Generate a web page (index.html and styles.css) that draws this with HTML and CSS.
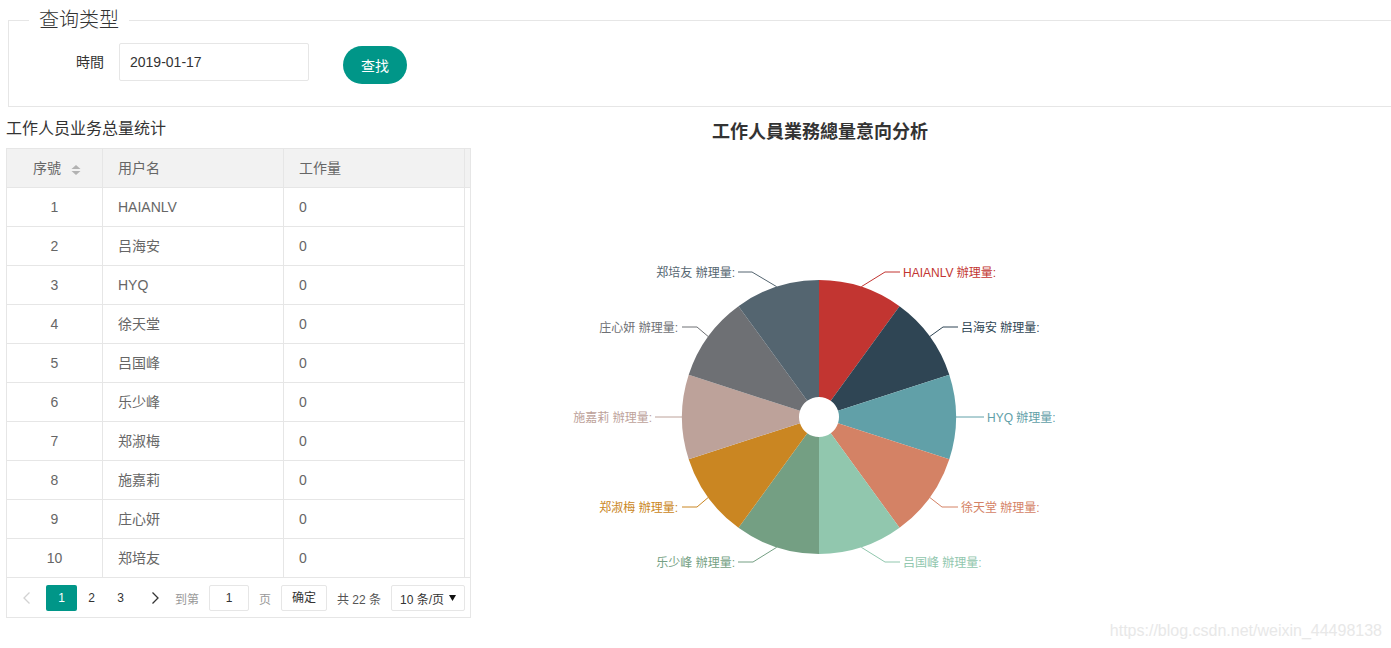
FILE: index.html
```html
<!DOCTYPE html>
<html lang="zh-CN">
<head>
<meta charset="utf-8">
<title>工作人员业务总量统计</title>
<link rel="stylesheet" href="styles.css">
</head>
<body>
<fieldset class="query">
  <legend class="query-legend">查询类型</legend>
  <div class="form-row">
    <label class="form-label" for="date">時間</label>
    <input class="form-input" id="date" type="text" value="2019-01-17">
    <button class="btn-search" type="button">查找</button>
  </div>
</fieldset>
<main class="main">
  <section class="left">
    <h2 class="left-title">工作人员业务总量统计</h2>
    <div class="tbl">
      <div class="tbl-head">
        <div class="th th-center"><span>序號</span><svg class="sort" width="10" height="10" viewBox="0 0 10 10"><polygon points="0.5,4 5,0 9.5,4" fill="#b2b2b2"/><polygon points="0.5,6 9.5,6 5,10" fill="#b2b2b2"/></svg></div>
        <div class="th">用户名</div>
        <div class="th">工作量</div>
        <div class="th th-gutter"></div>
      </div>
      <div class="tbl-body">
        <div class="tr"><div class="td td-center">1</div><div class="td">HAIANLV</div><div class="td">0</div></div>
        <div class="tr"><div class="td td-center">2</div><div class="td">吕海安</div><div class="td">0</div></div>
        <div class="tr"><div class="td td-center">3</div><div class="td">HYQ</div><div class="td">0</div></div>
        <div class="tr"><div class="td td-center">4</div><div class="td">徐天堂</div><div class="td">0</div></div>
        <div class="tr"><div class="td td-center">5</div><div class="td">吕国峰</div><div class="td">0</div></div>
        <div class="tr"><div class="td td-center">6</div><div class="td">乐少峰</div><div class="td">0</div></div>
        <div class="tr"><div class="td td-center">7</div><div class="td">郑淑梅</div><div class="td">0</div></div>
        <div class="tr"><div class="td td-center">8</div><div class="td">施嘉莉</div><div class="td">0</div></div>
        <div class="tr"><div class="td td-center">9</div><div class="td">庄心妍</div><div class="td">0</div></div>
        <div class="tr"><div class="td td-center">10</div><div class="td">郑培友</div><div class="td">0</div></div>
      </div>
      <div class="pager">
        <span class="pg-prev"><svg width="8" height="12" viewBox="0 0 8 12"><polyline points="6.5,0.5 1,6 6.5,11.5" fill="none" stroke="#d2d2d2" stroke-width="1.3"/></svg></span>
        <span class="pg-curr">1</span>
        <span class="pg-num">2</span>
        <span class="pg-num">3</span>
        <span class="pg-next"><svg width="8" height="12" viewBox="0 0 8 12"><polyline points="1.5,0.5 7,6 1.5,11.5" fill="none" stroke="#333" stroke-width="1.3"/></svg></span>
        <span class="pg-muted">到第</span>
        <span class="pg-input">1</span>
        <span class="pg-muted">页</span>
        <span class="pg-btn">确定</span>
        <span class="pg-count">共 22 条</span>
        <span class="pg-select"><span>10 条/页</span><svg width="7" height="6" viewBox="0 0 7 6"><polygon points="0,0 7,0 3.5,6" fill="#111"/></svg></span>
      </div>
    </div>
  </section>
  <section class="chart">
    <svg class="pie" width="698" height="500" viewBox="471 118 698 500">
      <text class="chart-title" x="820" y="132">工作人員業務總量意向分析</text>
      <g>
        <path fill="#c23531" d="M819,280 A137,137 0 0 1 899.53,306.17 L830.76,400.82 A20,20 0 0 0 819,397 Z"/>
        <path fill="#2f4554" d="M899.53,306.17 A137,137 0 0 1 949.29,374.67 L838.02,410.82 A20,20 0 0 0 830.76,400.82 Z"/>
        <path fill="#61a0a8" d="M949.29,374.67 A137,137 0 0 1 949.29,459.33 L838.02,423.18 A20,20 0 0 0 838.02,410.82 Z"/>
        <path fill="#d48265" d="M949.29,459.33 A137,137 0 0 1 899.53,527.83 L830.76,433.18 A20,20 0 0 0 838.02,423.18 Z"/>
        <path fill="#91c7ae" d="M899.53,527.83 A137,137 0 0 1 819,554 L819,437 A20,20 0 0 0 830.76,433.18 Z"/>
        <path fill="#749f83" d="M819,554 A137,137 0 0 1 738.47,527.83 L807.24,433.18 A20,20 0 0 0 819,437 Z"/>
        <path fill="#ca8622" d="M738.47,527.83 A137,137 0 0 1 688.71,459.33 L799.98,423.18 A20,20 0 0 0 807.24,433.18 Z"/>
        <path fill="#bda29a" d="M688.71,459.33 A137,137 0 0 1 688.71,374.67 L799.98,410.82 A20,20 0 0 0 799.98,423.18 Z"/>
        <path fill="#6e7074" d="M688.71,374.67 A137,137 0 0 1 738.47,306.17 L807.24,400.82 A20,20 0 0 0 799.98,410.82 Z"/>
        <path fill="#546570" d="M738.47,306.17 A137,137 0 0 1 819,280 L819,397 A20,20 0 0 0 807.24,400.82 Z"/>
      </g>
      <g fill="none" stroke-width="1">
        <polyline stroke="#c23531" points="861.3,286.7 885,272 900,272"/>
        <polyline stroke="#2f4554" points="929.8,336.5 943,327 958,327"/>
        <polyline stroke="#61a0a8" points="956,417 984,417"/>
        <polyline stroke="#d48265" points="929.8,497.5 942,507 958,507"/>
        <polyline stroke="#91c7ae" points="861.3,547.3 885,562 900,562"/>
        <polyline stroke="#749f83" points="776.7,547.3 753,562 738,562"/>
        <polyline stroke="#ca8622" points="708.2,497.5 697,507 682,507"/>
        <polyline stroke="#bda29a" points="682,417 655,417"/>
        <polyline stroke="#6e7074" points="708.2,336.5 697,327 682,327"/>
        <polyline stroke="#546570" points="776.7,286.7 752,272 738,272"/>
      </g>
      <g class="pie-labels">
        <text x="903" y="273" fill="#c23531">HAIANLV 辦理量:</text>
        <text x="961" y="328" fill="#2f4554">吕海安 辦理量:</text>
        <text x="987" y="418" fill="#61a0a8">HYQ 辦理量:</text>
        <text x="961" y="508" fill="#d48265">徐天堂 辦理量:</text>
        <text x="903" y="563" fill="#91c7ae">吕国峰 辦理量:</text>
        <text class="end" x="735" y="563" fill="#749f83">乐少峰 辦理量:</text>
        <text class="end" x="678" y="508" fill="#ca8622">郑淑梅 辦理量:</text>
        <text class="end" x="652" y="418" fill="#bda29a">施嘉莉 辦理量:</text>
        <text class="end" x="678" y="328" fill="#6e7074">庄心妍 辦理量:</text>
        <text class="end" x="735" y="273" fill="#546570">郑培友 辦理量:</text>
      </g>
    </svg>
  </section>
</main>
<div class="watermark">https://blog.csdn.net/weixin_44498138</div>
</body>
</html>
```

FILE: styles.css
```css
* {
  box-sizing: border-box;
}

html,
body {
  margin: 0;
  padding: 0;
  height: 100%;
  background: #fff;
}

body {
  position: relative;
  overflow: hidden;
  font-family: "Liberation Sans", "Noto Sans CJK SC", sans-serif;
  font-size: 14px;
  color: #333;
}

/* ---------- query fieldset ---------- */
.query {
  margin: 8px 0 0 8px;
  padding: 0 0 22px 0;
  border: 1px solid #e6e6e6;
  border-right: none;
  min-width: 0;
}

.query-legend {
  margin-left: 20px;
  padding: 0 10px;
  font-size: 20px;
  line-height: 24px;
  font-weight: 300;
  color: #333;
}

.form-row {
  display: flex;
  align-items: flex-start;
  margin-top: 11px;
}

.form-label {
  width: 110px;
  padding: 9px 15px;
  line-height: 20px;
  text-align: right;
  font-size: 14px;
  color: #333;
}

.form-input {
  width: 190px;
  height: 38px;
  padding: 0 10px;
  border: 1px solid #e6e6e6;
  border-radius: 2px;
  font: inherit;
  font-size: 14px;
  color: #333;
  outline: none;
}

.btn-search {
  margin-left: 34px;
  margin-top: 3px;
  height: 38px;
  padding: 0 18px;
  border: none;
  border-radius: 100px;
  background: #009688;
  color: #fff;
  font: inherit;
  font-size: 14px;
}

/* ---------- main ---------- */
.main {
  display: flex;
  margin-top: 11px;
}

.left {
  flex: none;
  width: 465px;
  margin-left: 6px;
}

.left-title {
  margin: 0 0 8px;
  font-size: 16px;
  line-height: 22px;
  font-weight: normal;
  color: #333;
}

.tbl {
  border: 1px solid #e6e6e6;
}

.tbl-head {
  display: grid;
  grid-template-columns: 96px 181px 181px 5px;
  background: #f2f2f2;
  border-bottom: 1px solid #e6e6e6;
}

.th {
  height: 38px;
  line-height: 38px;
  padding: 0 15px;
  border-right: 1px solid #e6e6e6;
  color: #666;
  font-size: 14px;
}

.th-center {
  display: flex;
  justify-content: center;
  align-items: center;
  gap: 10px;
  padding: 0 0 0 5px;
}

.sort {
  display: block;
  margin-top: 3px;
}

.th-gutter {
  padding: 0;
  border-right: none;
}

.tr {
  display: grid;
  grid-template-columns: 96px 181px 181px;
}

.td {
  height: 39px;
  line-height: 38px;
  padding: 0 15px;
  border-right: 1px solid #e6e6e6;
  border-bottom: 1px solid #e6e6e6;
  color: #666;
}

.tr:last-child .td {
  height: 38px;
  border-bottom: none;
}

.td-center {
  text-align: center;
}

/* ---------- pager ---------- */
.pager {
  display: flex;
  align-items: center;
  height: 40px;
  padding-top: 1px;
  border-top: 1px solid #e6e6e6;
  font-size: 12px;
  color: #333;
}

.pager > span {
  flex: none;
}

.pg-prev,
.pg-next {
  display: flex;
  align-items: center;
  justify-content: center;
  height: 26px;
}

.pg-prev {
  width: 14px;
  margin-left: 13px;
}

.pg-next {
  width: 20px;
  margin-left: 10px;
}

.pg-curr {
  width: 31px;
  height: 26px;
  margin-left: 12px;
  line-height: 26px;
  text-align: center;
  background: #009688;
  color: #fff;
  border-radius: 2px;
}

.pg-num {
  width: 29px;
  line-height: 26px;
  text-align: center;
}

.pg-muted {
  margin-left: 10px;
  color: #999;
}

.pg-input {
  width: 40px;
  height: 26px;
  margin-left: 10px;
  line-height: 24px;
  text-align: center;
  border: 1px solid #e6e6e6;
  border-radius: 2px;
}

.pg-btn {
  width: 46px;
  height: 26px;
  margin-left: 10px;
  line-height: 24px;
  text-align: center;
  border: 1px solid #e6e6e6;
  border-radius: 2px;
}

.pg-count {
  margin-left: 10px;
  color: #555;
}

.pg-select {
  display: flex;
  align-items: center;
  justify-content: space-between;
  width: 74px;
  height: 26px;
  margin-left: 10px;
  padding: 0 8px 0 8px;
  border: 1px solid #e6e6e6;
  border-radius: 2px;
}

/* ---------- chart ---------- */
.chart {
  flex: none;
  width: 698px;
}

.pie {
  display: block;
  font-family: "Liberation Sans", "Noto Sans CJK SC", sans-serif;
}

.chart-title {
  font-size: 18px;
  font-weight: bold;
  fill: #333;
  text-anchor: middle;
  dominant-baseline: central;
}

.pie-labels text {
  font-size: 12px;
  dominant-baseline: central;
}

.pie-labels .end {
  text-anchor: end;
}

/* ---------- watermark ---------- */
.watermark {
  position: absolute;
  right: 9px;
  bottom: 8px;
  font-size: 16px;
  color: #e8e8e8;
}
```
